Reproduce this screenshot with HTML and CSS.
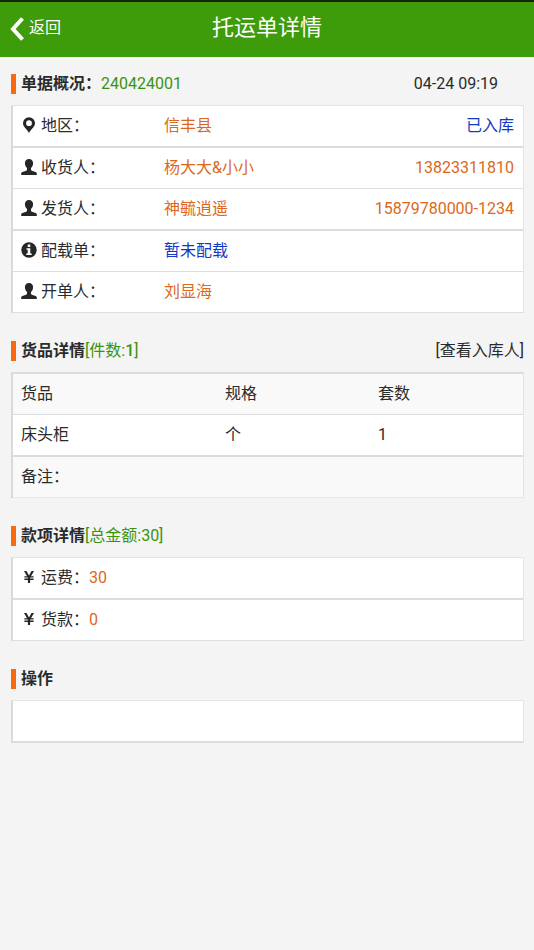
FILE: index.html
```html
<!DOCTYPE html>
<html lang="zh-CN">
<head>
<meta charset="utf-8">
<meta name="viewport" content="width=device-width, initial-scale=1">
<title>托运单详情</title>
<link rel="stylesheet" href="styles.css">
</head>
<body>
<svg class="sprite" aria-hidden="true">
  <symbol id="pin" viewBox="0 0 16 16"><path fill-rule="evenodd" d="M8 .2a6 6 0 0 0-6 6c0 3.600 3.800 5.600 6 9.800 2.200-4.200 6-6.200 6-9.800a6 6 0 0 0-6-6zm0 3.100a2.900 2.900 0 1 1 0 5.800 2.900 2.900 0 0 1 0-5.800z"/></symbol>
  <symbol id="user" viewBox="0 0 16 16"><path d="M8 0C5.500 0 3.900 1.700 3.900 4.100c0 2.200.8 3.900 2.100 5v1.500c0 .6-.3.900-.9 1.100L1.400 13C.5 13.400.2 14 .2 14.800V16h15.600v-1.200c0-.8-.3-1.400-1.200-1.800l-3.700-1.300c-.6-.2-.9-.5-.9-1.100V9.100c1.300-1.100 2.100-2.800 2.100-5C12.100 1.700 10.500 0 8 0z"/></symbol>
  <symbol id="info" viewBox="0 0 16 16"><path fill-rule="evenodd" d="M8 .3a7.700 7.700 0 1 1 0 15.400A7.700 7.700 0 0 1 8 .3zM6.700 2.600v2.300h2.600V2.600zM5.500 6.200v1.500h1.200v3.800H5.300V13h5.400v-1.500H9.300V6.200z"/></symbol>
  <symbol id="yen" viewBox="0 0 16 16"><path d="M3 2h2.500L8 6.500 10.500 2H13l-3 5.300h2.600v1.300H9.100v1h3.500v1.300H9.100V14H6.900v-3.100H3.400V9.600h3.500v-1H3.400V7.300H6z"/></symbol>
</svg>

<header class="topbar">
  <a class="back" href="#">
    <svg class="chevron" viewBox="0 0 14 24" aria-hidden="true"><path d="M12.500 1.500 3 12l9.500 10.500"/></svg>
    <span>返回</span>
  </a>
  <h1 class="title">托运单详情</h1>
</header>

<main class="content">
  <section class="section">
    <div class="section-head">
      <h2 class="heading">单据概况：<span class="green">240424001</span></h2>
      <time class="date">04-24 09:19</time>
    </div>
    <div class="panel">
      <div class="row strong"><div class="label"><svg class="icon"><use href="#pin"/></svg>地区：</div><div class="value">信丰县</div><div class="blue">已入库</div></div>
      <div class="row"><div class="label"><svg class="icon"><use href="#user"/></svg>收货人：</div><div class="value">杨大大&amp;小小</div><div class="orange">13823311810</div></div>
      <div class="row strong"><div class="label"><svg class="icon"><use href="#user"/></svg>发货人：</div><div class="value">神毓逍遥</div><div class="orange">15879780000-1234</div></div>
      <div class="row"><div class="label"><svg class="icon"><use href="#info"/></svg>配载单：</div><div class="value blue">暂未配载</div></div>
      <div class="row"><div class="label"><svg class="icon"><use href="#user"/></svg>开单人：</div><div class="value">刘显海</div></div>
    </div>
  </section>

  <section class="section">
    <div class="section-head">
      <h2 class="heading">货品详情<span class="green">[件数:<b>1</b>]</span></h2>
      <a class="lookup" href="#">[查看入库人]</a>
    </div>
    <table class="panel goods">
      <thead>
        <tr><th scope="col">货品</th><th scope="col">规格</th><th scope="col">套数</th></tr>
      </thead>
      <tbody>
        <tr><td>床头柜</td><td>个</td><td>1</td></tr>
      </tbody>
      <tfoot>
        <tr><td colspan="3">备注：</td></tr>
      </tfoot>
    </table>
  </section>

  <section class="section">
    <div class="section-head">
      <h2 class="heading">款项详情<span class="green">[总金额:30]</span></h2>
    </div>
    <div class="panel">
      <div class="row strong"><svg class="icon"><use href="#yen"/></svg>运费：<span class="orange">30</span></div>
      <div class="row"><svg class="icon"><use href="#yen"/></svg>货款：<span class="orange">0</span></div>
    </div>
  </section>

  <section class="section">
    <div class="section-head">
      <h2 class="heading">操作</h2>
    </div>
    <div class="panel">
      <div class="row strong"></div>
    </div>
  </section>
</main>
</body>
</html>
```
FILE: styles.css
```css
* {
  box-sizing: border-box;
}

body {
  margin: 0;
  background: #f4f4f4;
  color: #2b2b2b;
  font-family: Roboto, "Noto Sans CJK SC", sans-serif;
  font-size: 16px;
  line-height: 24px;
}

a {
  color: inherit;
  text-decoration: none;
}

.sprite {
  display: none;
}

.topbar {
  display: grid;
  grid-template-columns: 1fr auto 1fr;
  align-items: center;
  height: 57px;
  padding: 0 10px 3px;
  border-top: 2px solid #14240c;
  background: #3e9b0a;
  color: #fff;
}

.back {
  display: flex;
  align-items: center;
  gap: 5px;
}

.chevron {
  width: 14px;
  height: 24px;
  margin-top: 2px;
  fill: none;
  stroke: #fff;
  stroke-width: 4;
}

.title {
  margin: 0;
  font-size: 22px;
  font-weight: 400;
  line-height: 32px;
}

.content {
  padding: 0 10px 0 11px;
}

.section {
  margin-bottom: 11px;
}

.section-head {
  display: flex;
  align-items: center;
  justify-content: space-between;
  height: 48px;
  padding-top: 6px;
}

.heading {
  display: flex;
  align-items: center;
  margin: 0;
  font-size: 16px;
  font-weight: 700;
}

.heading::before {
  content: "";
  width: 5px;
  height: 20px;
  margin-right: 5px;
  background: #f96a0e;
}

.green {
  color: #3a930f;
  font-weight: 400;
}

.green b {
  font-weight: 500;
}

.orange,
.value {
  color: #dc6820;
}

.blue {
  color: #1239c4;
}

.date {
  margin-right: 26px;
}

.panel {
  border: 1px solid #e4e4e4;
  border-left: 2px solid #dadada;
  border-bottom: 0;
  background: #fff;
}

.row {
  display: flex;
  align-items: center;
  height: 41px;
  padding: 0 9px 0 8px;
  border-bottom: 1px solid #dedede;
}

.strong {
  height: 42px;
  border-bottom: 2px solid #dcdcdc;
}

.label {
  display: flex;
  align-items: center;
  flex: 0 0 29%;
}

.value {
  flex: 1;
}

.icon {
  flex: none;
  width: 16px;
  height: 16px;
  margin: 0 4px 2px 0;
  fill: #262626;
}

.goods {
  width: 100%;
  table-layout: fixed;
  border-top: 2px solid #dcdcdc;
  border-spacing: 0;
}

.goods th,
.goods td {
  height: 41px;
  padding: 0 8px;
  border-bottom: 1px solid #dcdcdc;
  font-weight: 400;
  text-align: left;
}

.goods th {
  width: 30%;
  background: #f9f9f9;
}

.goods th:first-child {
  width: 40%;
}

.goods tbody td {
  height: 42px;
  border-bottom: 2px solid #dcdcdc;
}

.goods tfoot td {
  border-bottom-color: #e8e8e8;
  background: #f9f9f9;
}
```
